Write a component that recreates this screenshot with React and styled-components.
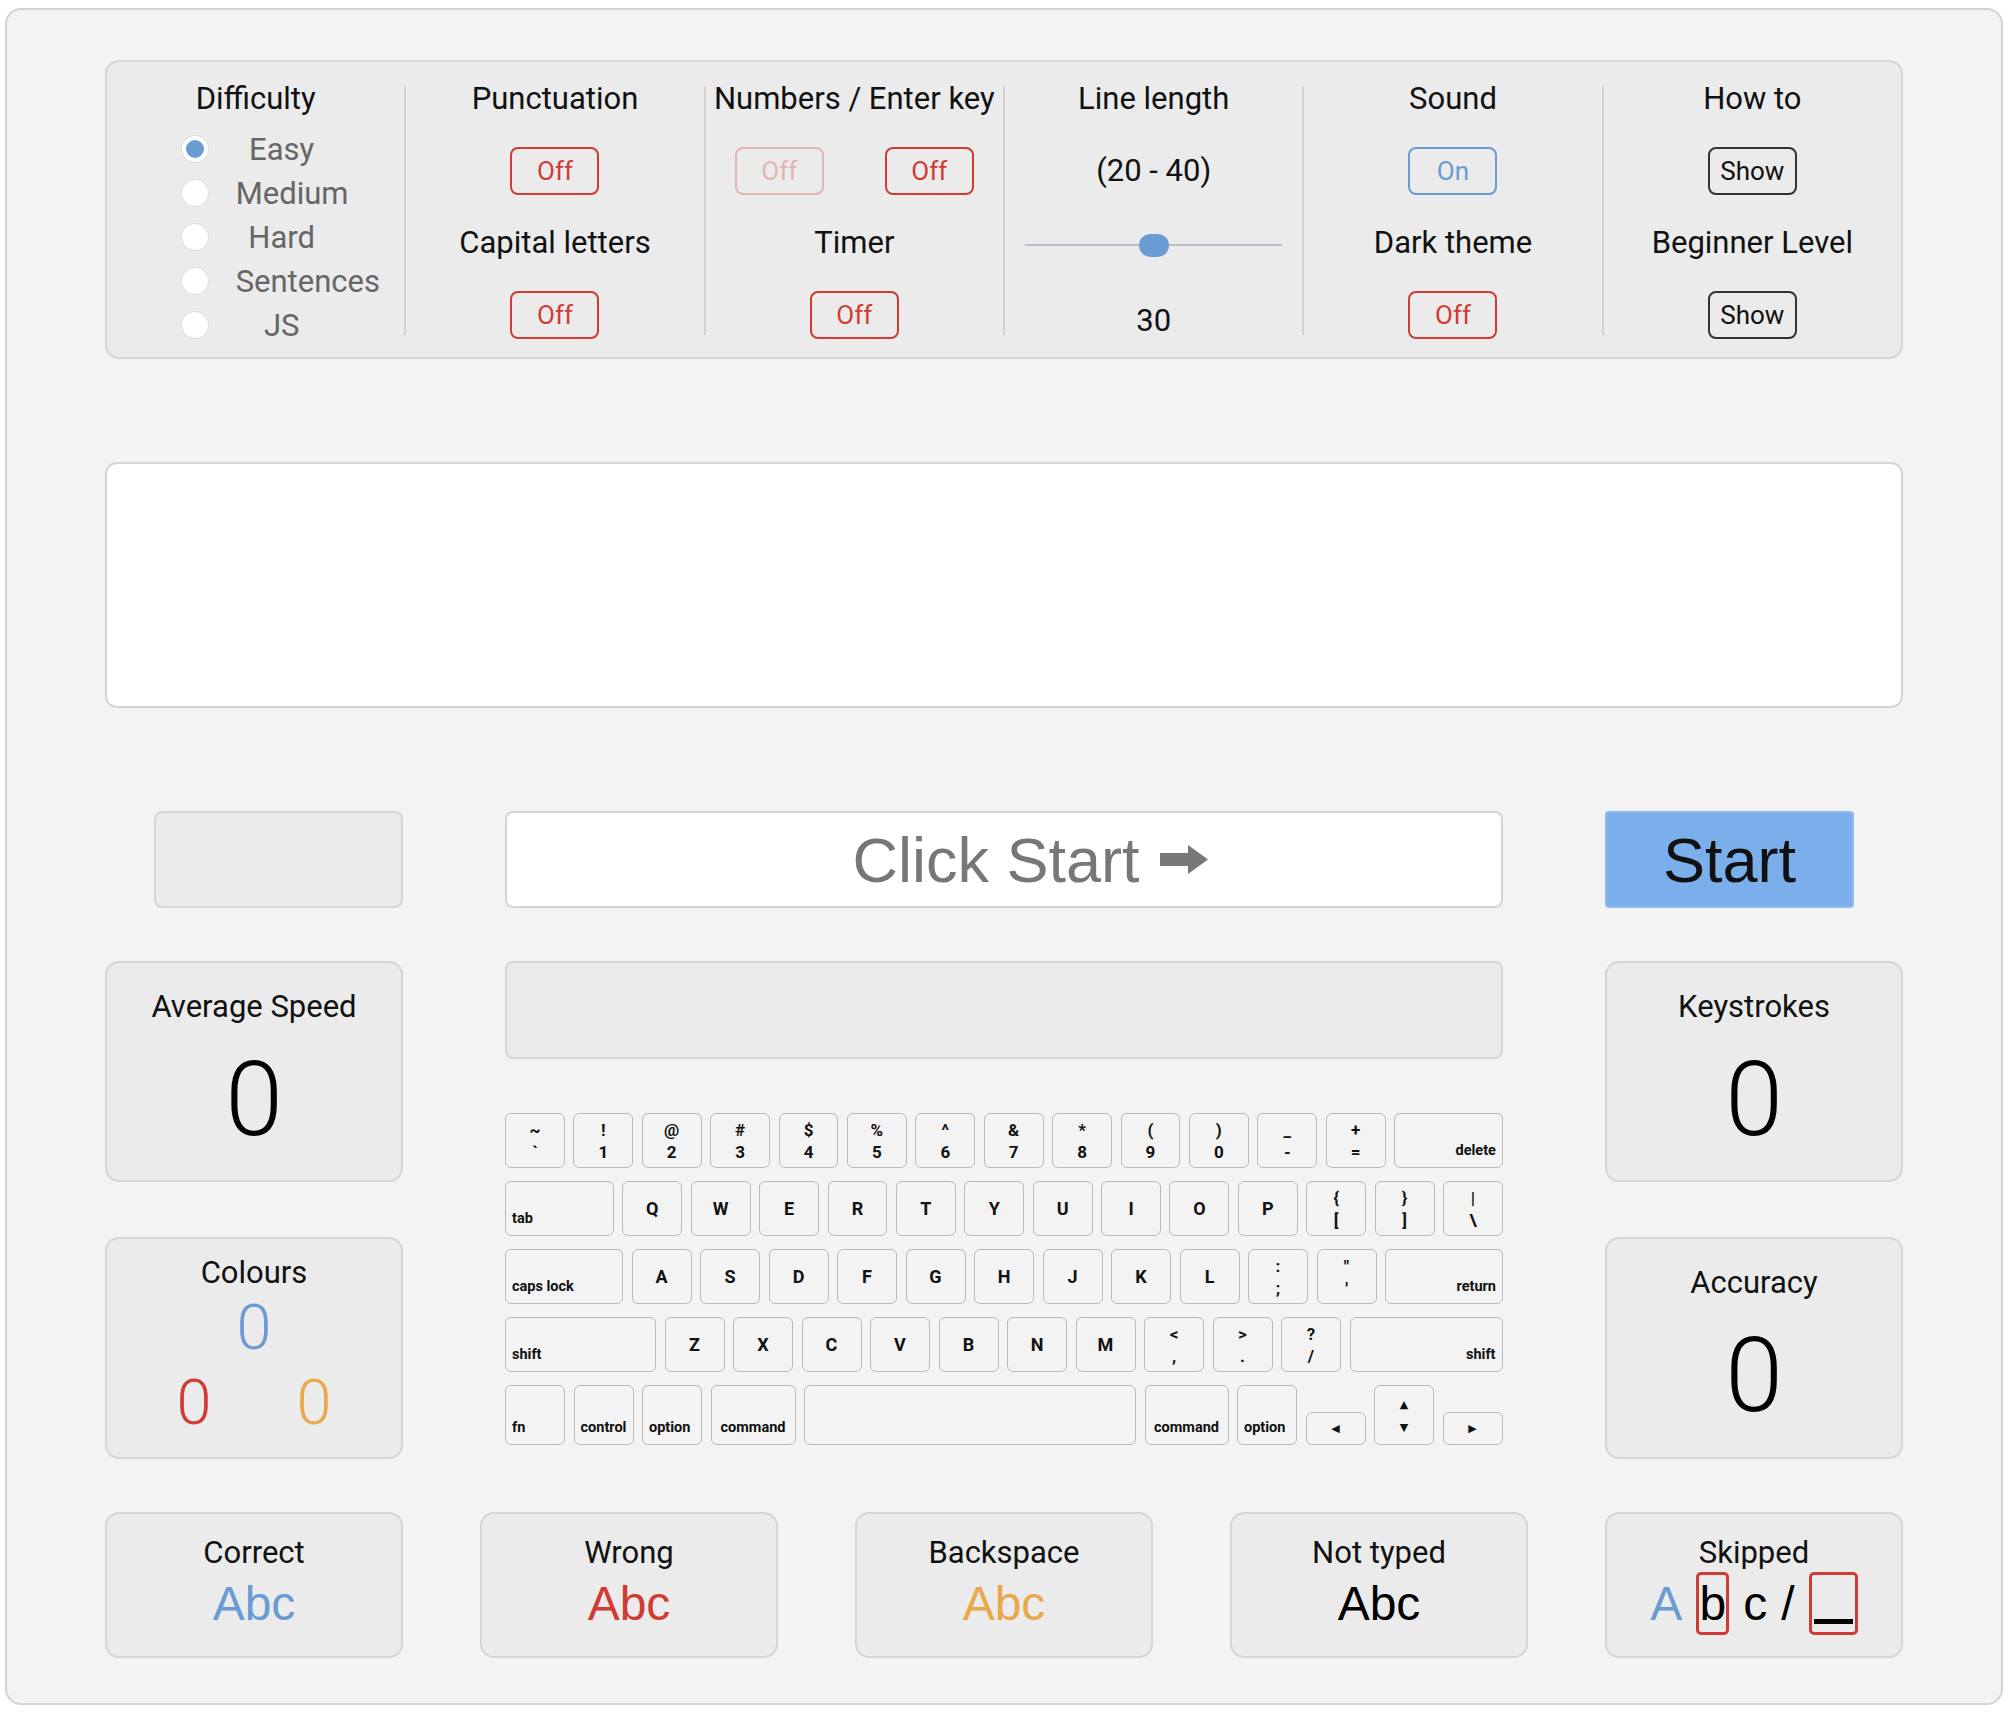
import React from 'react';
import styled, { createGlobalStyle } from 'styled-components';

const RED = '#d03b33';
const BLUE = '#6b9bd3';
const ORANGE = '#e8a84b';
const PANEL = '#ebebeb';
const EDGE = '#d5d5d5';

const GlobalStyle = createGlobalStyle`
  html, body { margin: 0; padding: 0; background: #fff; }
  body { font-family: Roboto, "Noto Sans", sans-serif; color: #111; }
  * { box-sizing: border-box; }
`;

const Page = styled.div`
  width: 1998px;
  margin: 8px 0 0 5px;
  padding: 50px 98px 45px;
  background: #f3f3f3;
  border: 2px solid #d3d3d3;
  border-radius: 16px;
  display: flex;
  flex-direction: column;
`;

/* ---------- settings ---------- */
const SettingsPanel = styled.div`
  height: 299px;
  background: ${PANEL};
  border: 2px solid ${EDGE};
  border-radius: 14px;
  padding-top: 1px;
  display: grid;
  grid-template-columns: repeat(5, 1fr 2px) 1fr;
  align-items: start;
`;

const Divider = styled.div`
  width: 2px;
  height: 249px;
  margin-top: 23px;
  background: #d2d2d2;
`;

const Column = styled.div`
  display: grid;
  grid-template-rows: repeat(4, 72px);
  justify-items: center;
  align-items: center;
  min-width: 0;
`;

const DiffColumn = styled.div`
  display: flex;
  flex-direction: column;
  align-items: center;
`;

const Label = styled.div`
  font-size: 31px;
  line-height: 36px;
  white-space: nowrap;
  color: #111;
  padding-top: ${p => p.$offset || 0}px;
`;

const Header = styled(Label)`
  height: 72px;
  line-height: 72px;
`;

const RadioList = styled.div`
  width: 148px;
  margin-top: -8px;
  display: flex;
  flex-direction: column;
`;

const RadioRow = styled.div`
  height: 44px;
  display: flex;
  align-items: center;
  gap: 28px;
`;

const Radio = styled.span`
  flex: none;
  width: 26px;
  height: 26px;
  border-radius: 50%;
  background: ${p => (p.$checked ? BLUE : '#fff')};
  border: ${p => (p.$checked ? '4px solid #fff' : 'none')};
  box-shadow: 0 0 0 1px #dedede;
`;

const RadioLabel = styled.span`
  min-width: 92px;
  text-align: center;
  font-size: 31px;
  color: #666;
  white-space: nowrap;
`;

const Toggle = styled.button`
  width: 89px;
  height: 48px;
  padding: 0;
  background: transparent;
  border: 2px solid ${p => p.$color};
  color: ${p => p.$text || p.$color};
  border-radius: 8px;
  font: 400 26px Roboto, sans-serif;
  opacity: ${p => (p.$faded ? 0.3 : 1)};
`;

const ButtonPair = styled.div`
  display: flex;
  gap: 61px;
`;

const Slider = styled.div`
  width: 257px;
  height: 24px;
  margin-top: 4px;
  display: flex;
  justify-content: center;
  align-items: center;
  background: linear-gradient(#b8c0cc, #b8c0cc) center / 100% 2px no-repeat;
`;

const Thumb = styled.span`
  width: 30px;
  height: 23px;
  border-radius: 12px;
  background: ${BLUE};
`;

/* ---------- text area ---------- */
const TextPanel = styled.div`
  margin-top: 103px;
  height: 246px;
  background: #fff;
  border: 2px solid ${EDGE};
  border-radius: 12px;
`;

/* ---------- middle ---------- */
const Middle = styled.div`
  margin-top: 103px;
  display: grid;
  grid-template-columns: 298px 998px 298px;
  grid-template-rows: 97px auto;
  justify-content: space-between;
  row-gap: 53px;
`;

const BlankBox = styled.div`
  width: 249px;
  justify-self: end;
  background: ${PANEL};
  border: 2px solid ${EDGE};
  border-radius: 8px;
`;

const ClickBox = styled.div`
  background: #fff;
  border: 2px solid ${EDGE};
  border-radius: 8px;
  display: flex;
  align-items: center;
  justify-content: center;
  gap: 20px;
  padding-left: 52px;
  font: 400 63px "Liberation Sans", Arial, sans-serif;
  color: #777;
`;

const StartButton = styled.button`
  width: 249px;
  justify-self: start;
  background: #7aafec;
  border: 2px solid #8cbaf0;
  border-radius: 4px;
  font: 400 63px "Liberation Sans", Arial, sans-serif;
  color: #111;
  padding: 0;
`;

const StatColumn = styled.div`
  display: flex;
  flex-direction: column;
  gap: 55px;
`;

const StatBox = styled.div`
  height: ${p => p.$h}px;
  padding-top: ${p => p.$pt}px;
  background: ${PANEL};
  border: 2px solid ${EDGE};
  border-radius: 14px;
  display: flex;
  flex-direction: column;
  align-items: center;
`;

const BigValue = styled.div`
  margin-top: 15px;
  font-size: 104px;
  font-weight: 300;
  line-height: 120px;
  color: #000;
`;

const ColourValue = styled.div`
  margin-top: ${p => p.$mt}px;
  font-size: 63px;
  font-weight: 300;
  line-height: 64px;
  color: ${p => p.$color};
`;

const ColourRow = styled.div`
  display: flex;
  gap: 85px;
`;

const CenterColumn = styled.div`
  display: flex;
  flex-direction: column;
  gap: 54px;
`;

const DisplayBar = styled.div`
  height: 98px;
  background: ${PANEL};
  border: 2px solid ${EDGE};
  border-radius: 8px;
`;

/* ---------- keyboard ---------- */
const Keyboard = styled.div`
  display: flex;
  flex-direction: column;
  gap: 13px;
`;

const KeyRow = styled.div`
  height: ${p => p.$h}px;
  display: flex;
  align-items: flex-end;
  gap: 8.5px;
`;

const KeyBase = styled.div`
  flex: 0 1 ${p => p.$w}px;
  min-width: 0;
  height: ${p => (p.$short ? '33px' : '100%')};
  border: 1px solid #b9b9b9;
  border-radius: 6px;
  display: flex;
  flex-direction: column;
  font-weight: 700;
  color: #111;
`;

const CharKey = styled(KeyBase)`
  align-items: center;
  justify-content: center;
  font-size: 18px;
`;

const DualKey = styled(KeyBase)`
  align-items: center;
  justify-content: center;
  font-size: 17px;
  line-height: 22px;
  padding-top: 1px;
`;

const ModKey = styled(KeyBase)`
  justify-content: flex-end;
  align-items: ${p => (p.$align === 'right' ? 'flex-end' : p.$align === 'center' ? 'center' : 'flex-start')};
  padding: 0 6px 8px 6px;
  font-size: 14.5px;
  white-space: nowrap;
  overflow: hidden;
`;

const ArrowKey = styled(KeyBase)`
  align-items: center;
  justify-content: ${p => (p.$split ? 'space-between' : 'center')};
  padding: ${p => (p.$split ? '12px 0 10px' : '0')};
  font-size: 11px;
  font-family: "DejaVu Sans", sans-serif;
`;

/* ---------- bottom ---------- */
const BottomRow = styled.div`
  margin-top: 53px;
  display: flex;
  justify-content: space-between;
`;

const LegendBox = styled.div`
  width: 298px;
  height: 146px;
  padding-top: 21px;
  background: ${PANEL};
  border: 2px solid ${EDGE};
  border-radius: 14px;
  display: flex;
  flex-direction: column;
  align-items: center;
`;

const Sample = styled.div`
  margin-top: 5px;
  font: 400 48px/56px "Liberation Sans", Arial, sans-serif;
  color: ${p => p.$color};
`;

const SkipRow = styled.div`
  margin-top: 1px;
  height: 63px;
  display: flex;
  align-items: center;
  gap: 14px;
  font: 400 48px/56px "Liberation Sans", Arial, sans-serif;
  color: #000;
`;

const SkipLetter = styled.span`
  color: ${p => p.$color || '#000'};
`;

const SkipBox = styled.span`
  height: 63px;
  width: ${p => p.$w}px;
  border: 3px solid ${RED};
  border-radius: 5px;
  display: flex;
  align-items: ${p => (p.$blank ? 'flex-end' : 'center')};
  justify-content: center;
  padding: ${p => (p.$blank ? '0 2px 8px' : '0')};
`;

const BlankBar = styled.span`
  width: 100%;
  height: 5px;
  background: #000;
`;

const Arrow = () => (
  <svg width="48" height="31" viewBox="0 0 48 31" fill="#777">
    <rect x="0" y="9" width="30" height="13" />
    <polygon points="28,1 48,15.5 28,30" />
  </svg>
);

const row1 = [
  ['~', '`'], ['!', '1'], ['@', '2'], ['#', '3'], ['$', '4'], ['%', '5'], ['^', '6'],
  ['&', '7'], ['*', '8'], ['(', '9'], [')', '0'], ['_', '-'], ['+', '='],
];

const renderKeys = keys =>
  keys.map((k, i) => {
    if (Array.isArray(k)) {
      return (
        <DualKey key={i} $w={60}>
          <span>{k[0]}</span>
          <span>{k[1]}</span>
        </DualKey>
      );
    }
    if (typeof k === 'object' && k.arrow) {
      return (
        <ArrowKey key={i} $w={60} $short={k.short} $split={k.split}>
          {k.arrow.map((a, j) => (
            <span key={j}>{a}</span>
          ))}
        </ArrowKey>
      );
    }
    if (typeof k === 'object') {
      return (
        <ModKey key={i} $w={k.w} $align={k.align}>
          {k.mod}
        </ModKey>
      );
    }
    return (
      <CharKey key={i} $w={60}>
        {k}
      </CharKey>
    );
  });

const rows = [
  { h: 55, keys: [...row1, { mod: 'delete', w: 109, align: 'right' }] },
  {
    h: 55,
    keys: [
      { mod: 'tab', w: 109 },
      ...'QWERTYUIOP'.split(''),
      ['{', '['], ['}', ']'], ['|', '\\'],
    ],
  },
  {
    h: 55,
    keys: [
      { mod: 'caps lock', w: 118 },
      ...'ASDFGHJKL'.split(''),
      [':', ';'], ['"', "'"],
      { mod: 'return', w: 118, align: 'right' },
    ],
  },
  {
    h: 55,
    keys: [
      { mod: 'shift', w: 151 },
      ...'ZXCVBNM'.split(''),
      ['<', ','], ['>', '.'], ['?', '/'],
      { mod: 'shift', w: 153, align: 'right' },
    ],
  },
  {
    h: 60,
    keys: [
      { mod: 'fn', w: 60 },
      { mod: 'control', w: 60, align: 'center' },
      { mod: 'option', w: 60 },
      { mod: 'command', w: 85, align: 'center' },
      { mod: '', w: 332 },
      { mod: 'command', w: 84, align: 'center' },
      { mod: 'option', w: 60 },
      { arrow: ['◀'], short: true },
      { arrow: ['▲', '▼'], split: true },
      { arrow: ['▶'], short: true },
    ],
  },
];

const difficulties = ['Easy', 'Medium', 'Hard', 'Sentences', 'JS'];

export default function App() {
  return (
    <>
      <GlobalStyle />
      <Page>
        <SettingsPanel>
          <DiffColumn>
            <Header>Difficulty</Header>
            <RadioList>
              {difficulties.map((d, i) => (
                <RadioRow key={d}>
                  <Radio $checked={i === 0} />
                  <RadioLabel>{d}</RadioLabel>
                </RadioRow>
              ))}
            </RadioList>
          </DiffColumn>
          <Divider />
          <Column>
            <Label>Punctuation</Label>
            <Toggle $color={RED}>Off</Toggle>
            <Label>Capital letters</Label>
            <Toggle $color={RED}>Off</Toggle>
          </Column>
          <Divider />
          <Column>
            <Label>Numbers / Enter key</Label>
            <ButtonPair>
              <Toggle $color={RED} $faded>Off</Toggle>
              <Toggle $color={RED}>Off</Toggle>
            </ButtonPair>
            <Label>Timer</Label>
            <Toggle $color={RED}>Off</Toggle>
          </Column>
          <Divider />
          <Column>
            <Label>Line length</Label>
            <Label>(20 - 40)</Label>
            <Slider>
              <Thumb />
            </Slider>
            <Label $offset={12}>30</Label>
          </Column>
          <Divider />
          <Column>
            <Label>Sound</Label>
            <Toggle $color={BLUE}>On</Toggle>
            <Label>Dark theme</Label>
            <Toggle $color={RED}>Off</Toggle>
          </Column>
          <Divider />
          <Column>
            <Label>How to</Label>
            <Toggle $color="#333" $text="#111">Show</Toggle>
            <Label>Beginner Level</Label>
            <Toggle $color="#333" $text="#111">Show</Toggle>
          </Column>
        </SettingsPanel>

        <TextPanel />

        <Middle>
          <BlankBox />
          <ClickBox>
            <span>Click Start</span>
            <Arrow />
          </ClickBox>
          <StartButton>Start</StartButton>

          <StatColumn>
            <StatBox $h={221} $pt={26}>
              <Label>Average Speed</Label>
              <BigValue>0</BigValue>
            </StatBox>
            <StatBox $h={222} $pt={16}>
              <Label>Colours</Label>
              <ColourValue $mt={5} $color={BLUE}>0</ColourValue>
              <ColourRow>
                <ColourValue $mt={11} $color={RED}>0</ColourValue>
                <ColourValue $mt={11} $color={ORANGE}>0</ColourValue>
              </ColourRow>
            </StatBox>
          </StatColumn>

          <CenterColumn>
            <DisplayBar />
            <Keyboard>
              {rows.map((r, i) => (
                <KeyRow key={i} $h={r.h}>
                  {renderKeys(r.keys)}
                </KeyRow>
              ))}
            </Keyboard>
          </CenterColumn>

          <StatColumn>
            <StatBox $h={221} $pt={26}>
              <Label>Keystrokes</Label>
              <BigValue>0</BigValue>
            </StatBox>
            <StatBox $h={222} $pt={26}>
              <Label>Accuracy</Label>
              <BigValue>0</BigValue>
            </StatBox>
          </StatColumn>
        </Middle>

        <BottomRow>
          <LegendBox>
            <Label>Correct</Label>
            <Sample $color={BLUE}>Abc</Sample>
          </LegendBox>
          <LegendBox>
            <Label>Wrong</Label>
            <Sample $color={RED}>Abc</Sample>
          </LegendBox>
          <LegendBox>
            <Label>Backspace</Label>
            <Sample $color={ORANGE}>Abc</Sample>
          </LegendBox>
          <LegendBox>
            <Label>Not typed</Label>
            <Sample $color="#000">Abc</Sample>
          </LegendBox>
          <LegendBox>
            <Label>Skipped</Label>
            <SkipRow>
              <SkipLetter $color={BLUE}>A</SkipLetter>
              <SkipBox $w={33}>b</SkipBox>
              <SkipLetter>c</SkipLetter>
              <SkipLetter>/</SkipLetter>
              <SkipBox $w={49} $blank>
                <BlankBar />
              </SkipBox>
            </SkipRow>
          </LegendBox>
        </BottomRow>
      </Page>
    </>
  );
}
